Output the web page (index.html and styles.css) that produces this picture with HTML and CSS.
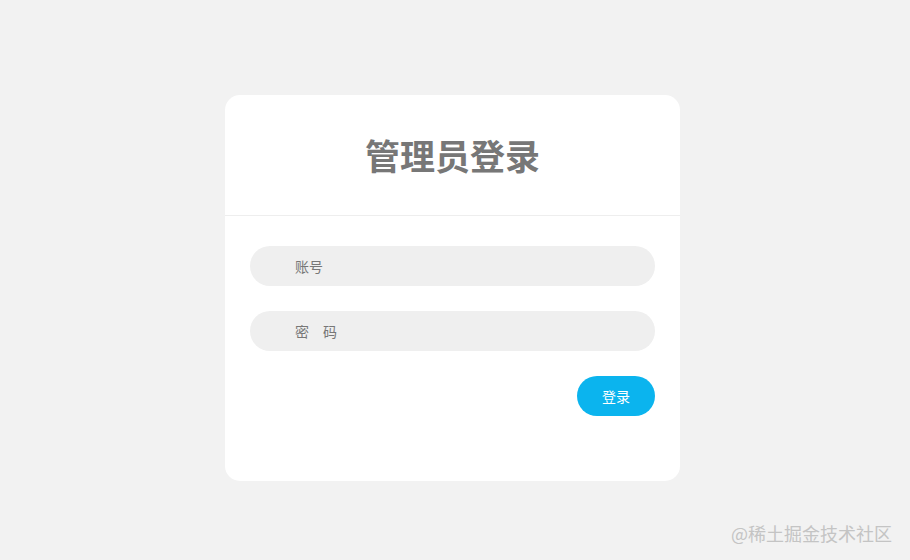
FILE: index.html
```html
<!DOCTYPE html>
<html lang="zh">
<head>
    <meta charset="UTF-8">
    <meta name="viewport" content="width=device-width, initial-scale=1.0">
    <title>管理员登录</title>
    <link rel="stylesheet" href="styles.css">
</head>
<body>
    <div class="login">
        <div class="login-head">
            <h1>管理员登录</h1>
        </div>
        <form class="login-form">
            <input type="text" class="ipt" placeholder="账号">
            <input type="password" class="ipt" placeholder="密　码">
            <div class="btn-row">
                <button type="button" class="btn">登录</button>
            </div>
        </form>
    </div>
    <div class="mark">@稀土掘金技术社区</div>
</body>
</html>
```

FILE: styles.css
```css
*{
    margin: 0;
    padding: 0;
    box-sizing: border-box;
}
html,body{
    height: 100%;
}
body{
    position: relative;
    background: #f2f2f2;
    font-family: "Microsoft YaHei", "Noto Sans CJK SC", sans-serif;
    overflow: hidden;
}
.login{
    width: 455px;
    margin: 95px 0 0 225px;
    background: #fff;
    border-radius: 15px;
}
.login-head{
    height: 121px;
    display: flex;
    align-items: center;
    justify-content: center;
    border-bottom: 1px solid #eee;
}
.login-head h1{
    font-size: 35px;
    font-weight: bold;
    color: #777;
    letter-spacing: 0;
    padding-bottom: 2px;
}
.login-form{
    display: flex;
    flex-direction: column;
    gap: 25px;
    padding: 30px 25px 65px;
}
.ipt{
    height: 40px;
    border: none;
    outline: none;
    border-radius: 20px;
    background: #efefef;
    padding-left: 45px;
    font-family: inherit;
    font-size: 14px;
    color: #555;
}
.ipt::placeholder{
    color: #777;
}
.btn-row{
    display: flex;
    justify-content: flex-end;
}
.btn{
    width: 78px;
    height: 40px;
    border: none;
    border-radius: 20px;
    background: #0bb4ee;
    color: #fff;
    font-family: inherit;
    font-size: 14px;
    cursor: pointer;
}
.mark{
    position: absolute;
    right: 18px;
    bottom: 14px;
    font-size: 18px;
    color: #c4c4c4;
    letter-spacing: 0;
}
```
